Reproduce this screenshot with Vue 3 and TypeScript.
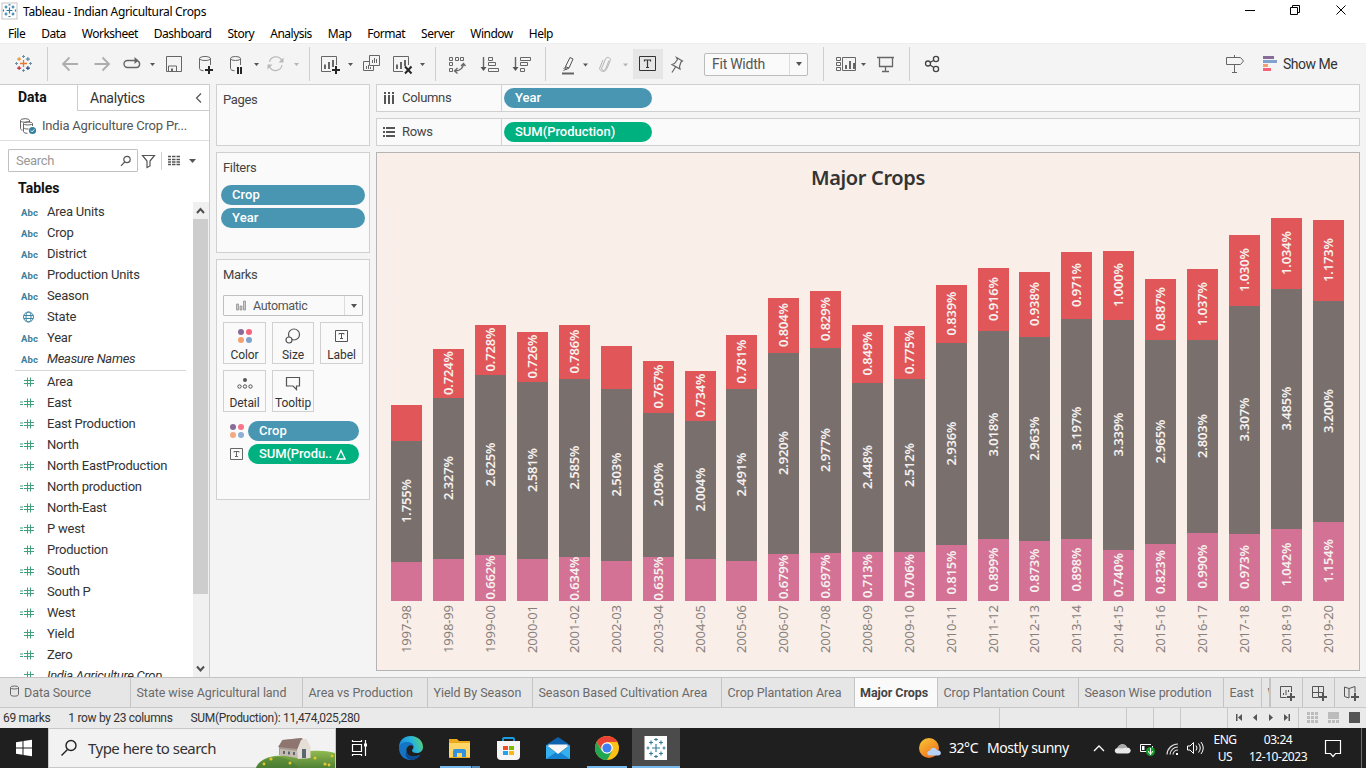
<script setup lang="ts">
interface Field { name: string; kind: 'abc' | 'geo' | 'num' | 'calc'; italic?: boolean }

const menus = ['File', 'Data', 'Worksheet', 'Dashboard', 'Story', 'Analysis', 'Map', 'Format', 'Server', 'Window', 'Help']

const dimensions: Field[] = [
  { name: 'Area Units', kind: 'abc' },
  { name: 'Crop', kind: 'abc' },
  { name: 'District', kind: 'abc' },
  { name: 'Production Units', kind: 'abc' },
  { name: 'Season', kind: 'abc' },
  { name: 'State', kind: 'geo' },
  { name: 'Year', kind: 'abc' },
  { name: 'Measure Names', kind: 'abc', italic: true },
]
const measures: Field[] = [
  { name: 'Area', kind: 'num' },
  { name: 'East', kind: 'calc' },
  { name: 'East Production', kind: 'calc' },
  { name: 'North', kind: 'calc' },
  { name: 'North EastProduction', kind: 'calc' },
  { name: 'North production', kind: 'calc' },
  { name: 'North-East', kind: 'calc' },
  { name: 'P west', kind: 'calc' },
  { name: 'Production', kind: 'num' },
  { name: 'South', kind: 'calc' },
  { name: 'South P', kind: 'calc' },
  { name: 'West', kind: 'calc' },
  { name: 'Yield', kind: 'num' },
  { name: 'Zero', kind: 'calc' },
  { name: 'India Agriculture Crop', kind: 'num', italic: true },
]

// x, top of the red, grey and pink segments, then their labels
type Bar = [string, number, number, number, number, string, string, string]
const base = 601
const bars: Bar[] = [
  ['1997-98', 391, 405, 441, 562, '', '1.755%', ''],
  ['1998-99', 433, 349, 398, 559, '0.724%', '2.327%', ''],
  ['1999-00', 475, 325, 375, 555, '0.728%', '2.625%', '0.662%'],
  ['2000-01', 517, 332, 382, 559, '0.726%', '2.581%', ''],
  ['2001-02', 559, 325, 379, 557, '0.786%', '2.585%', '0.634%'],
  ['2002-03', 601, 346, 389, 561, '', '2.503%', ''],
  ['2003-04', 643, 361, 413, 557, '0.767%', '2.090%', '0.635%'],
  ['2004-05', 685, 371, 421, 559, '0.734%', '2.004%', ''],
  ['2005-06', 726, 335, 389, 561, '0.781%', '2.491%', ''],
  ['2006-07', 768, 298, 353, 554, '0.804%', '2.920%', '0.679%'],
  ['2007-08', 810, 291, 348, 553, '0.829%', '2.977%', '0.697%'],
  ['2008-09', 852, 325, 383, 552, '0.849%', '2.448%', '0.713%'],
  ['2009-10', 894, 326, 379, 552, '0.775%', '2.512%', '0.706%'],
  ['2010-11', 936, 285, 343, 545, '0.839%', '2.936%', '0.815%'],
  ['2011-12', 978, 268, 331, 539, '0.916%', '3.018%', '0.899%'],
  ['2012-13', 1019, 272, 337, 541, '0.938%', '2.963%', '0.873%'],
  ['2013-14', 1061, 252, 319, 539, '0.971%', '3.197%', '0.898%'],
  ['2014-15', 1103, 251, 320, 550, '1.000%', '3.339%', '0.740%'],
  ['2015-16', 1145, 279, 340, 544, '0.887%', '2.965%', '0.823%'],
  ['2016-17', 1187, 269, 340, 533, '1.037%', '2.803%', '0.990%'],
  ['2017-18', 1229, 235, 306, 534, '1.030%', '3.307%', '0.973%'],
  ['2018-19', 1271, 218, 289, 529, '1.034%', '3.485%', '1.042%'],
  ['2019-20', 1313, 220, 301, 522, '1.173%', '3.200%', '1.154%'],
]
const colors = ['#e15759', '#79706e', '#d37295']
const segments = bars.flatMap(b => {
  const edges = [b[2], b[3], b[4], base]
  return colors.map((color, k) => ({
    color, x: b[1], y: edges[k], h: edges[k + 1] - edges[k], label: b[5 + k] as string,
  }))
})
const grid = [242, 302, 361, 421, 481, 541]

const sheets = [
  { name: 'State wise Agricultural land', w: 172 },
  { name: 'Area vs Production', w: 125 },
  { name: 'Yield By Season', w: 105 },
  { name: 'Season Based Cultivation Area', w: 189 },
  { name: 'Crop Plantation Area', w: 133 },
  { name: 'Major Crops', w: 83, active: true },
  { name: 'Crop Plantation Count', w: 141 },
  { name: 'Season Wise prodution', w: 145 },
  { name: 'East', w: 38 },
  { name: 'West', w: 8 },
]
const marks = ['Color', 'Size', 'Label', 'Detail', 'Tooltip']
const satellites = [[-4.4, -4.4, '#eb912c'], [4.4, -4.4, '#59879b'], [-4.4, 4.6, '#c72035'], [4.4, 4.6, '#1f457e']] as const
const outer = [[0, -7], [-7, 0], [7, 0], [0, 7]] as const
</script>

<template>
  <div class="screen">
    <header class="titlebar">
      <svg class="app-icon" width="17" height="18" viewBox="1 2 17 18">
        <rect x="2" y="3" width="15" height="16" fill="#fff" stroke="#c4c4c4" />
        <g stroke="#2f7ba4" stroke-width="1.2">
          <path d="M6.5 10.5h6M9.5 7.5v6M4.5 7h3M6 5.500v3M11.500 7h3M13 5.500v3M4.500 14h3M6 12.500v3M11.500 14h3M13 12.500v3M8.500 4.800h2M8.500 16.500h2M3.500 9.500v2M15.500 9.500v2" />
        </g>
      </svg>
      <span class="app-title">Tableau - Indian Agricultural Crops</span>
      <svg class="window-buttons" width="126" height="24" viewBox="1240 0 126 24" fill="none" stroke="#000">
        <path d="M1245 10.500h10M1290.500 7.500h7v7h-7zM1292.500 7.500v-2h7v7h-2M1336.500 5.500l9 9M1345.500 5.500l-9 9" />
      </svg>
    </header>

    <nav class="menu"><span v-for="m in menus" :key="m">{{ m }}</span></nav>

    <div class="toolbar">
      <svg width="48" height="41" viewBox="0 43 48 41" fill="none">
        <path d="M20 63.500h7M23.500 60v7" stroke="#e8762c" stroke-width="1.300" />
        <path v-for="(s, i) in satellites" :key="i" :d="`M${23.5 + s[0] - 2} ${63.5 + s[1]}h4M${23.5 + s[0]} ${63.5 + s[1] - 2}v4`" :stroke="s[2]" stroke-width="1.100" />
        <path v-for="(s, i) in outer" :key="'o' + i" :d="`M${23.5 + s[0] - 1.5} ${63.5 + s[1]}h3M${23.5 + s[0]} ${63.5 + s[1] - 1.5}v3`" stroke="#6a8fa6" />
        <path d="M47.500 47v34" stroke="#cfcfcf" />
      </svg>
      <svg width="262" height="41" viewBox="48 43 262 41" fill="none" stroke="#666">
        <path d="M78 64H63.500M69.500 57.500L63 64l6.500 6.500M94.500 64h14.500M102.500 57.500L109 64l-6.500 6.500" stroke="#adadad" stroke-width="1.800" />
        <path d="M132 60.500h-4.500a3.500 3.500 0 0 0 0 7h9a3.500 3.500 0 0 0 1-6.700M132 60.500h6" stroke-width="1.400" />
        <path d="M134.500 57l4 3.500-4 3.500z" fill="#666" stroke="none" />
        <path d="M166.500 56.500h15v15h-15zM168.500 71.500v-5.500h8v5.500" />
        <path d="M171 68.500h2v3h-2z" fill="#666" stroke="none" />
        <path d="M199.500 58.500v10c0 1.500 2 2 4 2.200M210.500 58.500v6.500" />
        <ellipse cx="205" cy="58.500" rx="5.500" ry="2" />
        <path d="M205 70h8M209 66v8" stroke="#262626" stroke-width="2" />
        <path d="M230.500 58.500v10c0 1.500 2 2 4 2.200M240.500 58.500v6.500" />
        <ellipse cx="235.500" cy="58.500" rx="5" ry="2" />
        <path d="M238 67v7M241 67v7" stroke="#262626" stroke-width="2" />
        <path d="M269.500 62a6.500 6.500 0 0 1 12-2M282 65a6.500 6.500 0 0 1-12.200 2" stroke="#b8b8b8" stroke-width="1.200" />
        <path d="M283.500 57.500v5h-5zM267.500 69.500v-5h5z" fill="#b8b8b8" stroke="none" />
        <path d="M150 63h5l-2.500 3zM254 63h5l-2.500 3z" fill="#555" stroke="none" />
        <path d="M294 63h5l-2.500 3z" fill="#b4b4b4" stroke="none" />
        <path d="M309.500 47v34" stroke="#cfcfcf" />
      </svg>
      <svg width="126" height="41" viewBox="310 43 126 41" fill="none" stroke="#666">
        <path d="M336.500 65v-8.500h-15v15h9.500M408.500 65v-8.500h-15v15h9.500" />
        <path d="M325 69v-4.500M329 69v-7M333 67v-7M397 69v-4.500M401 69v-7M405 66v-6" stroke-width="2" />
        <path d="M332 70h8M336 66v8" stroke="#262626" stroke-width="2" />
        <path d="M405 66.500l6.500 7M411.500 66.500l-6.500 7" stroke="#262626" stroke-width="2" />
        <path d="M369.500 55.500h10v10h-10zM369.500 61.500h-6v9h10v-5" />
        <path d="M372.500 63v-3M374.500 63v-5M376.500 63v-4M366.500 69v-3M368.500 69v-4M370.500 69v-2" />
        <path d="M348 63h5l-2.500 3zM420 63h5l-2.500 3z" fill="#555" stroke="none" />
        <path d="M435.500 47v34" stroke="#cfcfcf" />
      </svg>
      <svg width="111" height="41" viewBox="436 43 111 41" fill="none" stroke="#666">
        <path d="M449.500 57.500h3v3h-3zM455.500 57.500h3v3h-3zM460.500 57.500h3v3h-3zM449.500 62.500h3v3h-3zM449.500 68.500h3v3h-3z" />
        <path d="M463.500 64q-.5 6-8 7M461 66l2.500-2.500 2 2.500M457.500 68l-3 3 3 2.500" stroke-width="1.300" />
        <path d="M483.500 57v12M515.500 57v12" stroke-width="1.400" />
        <path d="M480.500 67h6l-3 4zM512.500 67h6l-3 4z" fill="#555" stroke="none" />
        <path d="M488.500 57.500h4v3h-4zM488.500 62.500h7v3h-7zM488.500 68.500h10v3h-10zM520.500 57.500h10v3h-10zM520.500 62.500h7v3h-7zM520.500 68.500h4v3h-4z" />
        <path d="M545.500 47v34" stroke="#cfcfcf" />
      </svg>
      <div class="tool-format">
        <svg width="86" height="41" viewBox="547 43 86 41" fill="none" stroke="#555">
          <path d="M565.500 65.500l4.500-9 3 1.500-4 9-3 1.500zM565.500 65.500l3.500 1.700M563.500 67.500l2-1M563.500 69.500l3-1.500" />
          <path d="M562 72.500h12" stroke="#666" stroke-width="2" />
          <path d="M609 59.500l-3.500 8.500c-1 2.500-4.500 1.500-3.800-1l3.800-9c1.500-3 5.500-1.500 4.800 1.500l-3.800 9c-1.500 3-7 2.500-6.800-1.500l3.300-8" stroke="#b4b4b4" />
          <path d="M583 62.500h5l-2.500 3z" fill="#555" stroke="none" />
          <path d="M623 62.500h5l-2.500 3z" fill="#b4b4b4" stroke="none" />
        </svg>
        <span class="label-toggle">
          <svg width="30" height="30" viewBox="633 49 30 30" fill="none" stroke="#333">
            <path d="M639.500 56.500h16v14h-16z" />
            <path d="M644.500 61.500v-1.500h6v1.500M647.500 60v7.500M646 67.500h3" stroke-width="1.200" />
          </svg>
        </span>
        <svg width="41" height="41" viewBox="663 43 41 41" fill="none" stroke="#666" stroke-width="1.200">
          <path d="M676.500 56.500l6 3.500-1.500 1-1.500 4.500.5 2.500-8-4.500 2.500-1 3-4zM675.500 66l-3.500 5.500" />
        </svg>
        <div class="fit"><span>Fit Width</span><i></i></div>
      </div>
      <svg width="87" height="41" viewBox="823 43 87 41" fill="none" stroke="#666">
        <path d="M823.500 47v34M909.500 47v34" stroke="#cfcfcf" />
        <path d="M836.500 57.500h4v3h-4zM836.500 62.500h4v3h-4zM836.500 67.500h4v3h-4zM842.500 57.500h13v13h-13z" />
        <path d="M846 69v-4M850 69v-8M854 69v-6" stroke-width="2" />
        <path d="M861 63h5l-2.500 3z" fill="#555" stroke="none" />
        <path d="M877 57.500h17M879.500 58v8.500h13V58M885.500 67v4.500M882 71.500h7" stroke-width="1.300" />
      </svg>
      <svg width="40" height="41" viewBox="910 43 40 41" fill="none" stroke="#444" stroke-width="1.300">
        <circle cx="928" cy="63.500" r="2.500" /><circle cx="936" cy="59" r="2.600" /><circle cx="936" cy="69" r="2.600" />
        <path d="M930 62.500l3.500-2M930 65l3.800 2.500" />
      </svg>
      <svg class="show-icons" width="64" height="41" viewBox="1218 43 64 41" fill="none" stroke="#666">
        <path d="M1234.500 55v2M1226.500 57.500h14l3 3.500-3 3.500h-14zM1234.500 64.500v8M1232 72.500h5" />
        <g stroke="none">
          <path d="M1263 56h11v3h-11z" fill="#876c97" /><path d="M1263 60h14v3h-14z" fill="#7fa3cd" />
          <path d="M1263 64h5v3h-5z" fill="#f4a16f" /><path d="M1263 68h8v3h-8z" fill="#f8637a" />
        </g>
      </svg>
      <span class="show-me">Show Me</span>
    </div>

    <main class="workspace">
      <aside class="data-pane">
        <div class="pane-tabs">
          <b>Data</b>
          <div><span>Analytics</span><svg width="8" height="12" viewBox="0 0 8 12"><path d="M6 1.500L1.500 6 6 10.500" fill="none" stroke="#555" stroke-width="1.200" /></svg></div>
        </div>
        <div class="source">
          <svg width="18" height="18" viewBox="19 116 18 18" fill="none" stroke="#666">
            <ellipse cx="25" cy="119.500" rx="4.500" ry="1.800" /><path d="M20.500 119.500v8c0 1 1 1.500 2 1.700M29.500 119v2" />
            <ellipse cx="28" cy="122.500" rx="4.500" ry="1.500" /><path d="M23.500 122.500v8c0 1.200 2 1.800 4 1.800M32.500 122.500v2.500M23.500 126.500c1 1.500 3 1.500 5 1.500" />
            <circle cx="32.500" cy="129.500" r="3.600" fill="#35809f" stroke="none" /><path d="M30.800 129.500l1.300 1.300 2.200-2.400" stroke="#fff" />
          </svg>
          <span>India Agriculture Crop Pr...</span>
        </div>
        <div class="search-row">
          <div class="search"><span>Search</span><svg width="12" height="12" viewBox="0 0 12 12" fill="none" stroke="#555" stroke-width="1.200"><circle cx="7" cy="4.500" r="3.200" /><path d="M4.700 7L1 10.800" /></svg></div>
          <svg width="60" height="20" viewBox="138 150 60 20" fill="none" stroke="#555">
            <path d="M142.500 154.500h12l-4.500 5.500v5l-3 1.500V160z" stroke-width="1.200" />
            <path d="M161.500 151v18" stroke="#d0d0d0" />
            <path d="M168 155.500h3M172 155.500h3.500M176.500 155.500h3.500M168 158.500h3M172 158.500h3.500M176.500 158.500h3.500M168 161h3M172 161h3.500M176.500 161h3.500M168 163.500h3M172 163.500h3.500M176.500 163.500h3.500" stroke-width="1.300" />
            <path d="M189 158h7l-3.500 4z" fill="#555" stroke="none" />
          </svg>
        </div>
        <h3>Tables</h3>
        <div class="fields">
          <div class="field-list">
            <template v-for="(group, g) in [dimensions, measures]" :key="g">
              <div v-if="g === 1" class="rule"></div>
              <div v-for="f in group" :key="f.name" class="field" :class="{ italic: f.italic }">
                <span v-if="f.kind === 'abc'" class="abc">Abc</span>
                <svg v-else-if="f.kind === 'geo'" class="glyph" width="20" height="15" viewBox="0 0 20 15" fill="none" stroke="#3f86a6">
                  <circle cx="10.500" cy="8" r="5" /><ellipse cx="10.500" cy="8" rx="2.500" ry="5" /><path d="M6 6.500h9M6 9.500h9" />
                </svg>
                <svg v-else class="glyph" width="20" height="15" viewBox="0 0 20 15" fill="none" stroke="#3ea37c">
                  <path d="M6 6.500h10M6 9.500h10M9.500 3.500v9M12.500 3.500v9" />
                  <path v-if="f.kind === 'calc'" d="M2 7h3M2 9.500h3" />
                </svg>
                <span>{{ f.name }}</span>
              </div>
            </template>
          </div>
          <div class="scroll">
            <svg width="15" height="17" viewBox="0 0 15 17"><path d="M4 11l3.500-4 3.500 4" fill="none" stroke="#505050" stroke-width="2" /></svg>
            <div class="thumb"></div>
            <svg class="down" width="15" height="17" viewBox="0 0 15 17"><path d="M4 6.500l3.500 4 3.500-4" fill="none" stroke="#505050" stroke-width="2" /></svg>
          </div>
        </div>
      </aside>

      <section class="cards">
        <div class="card pages"><h4>Pages</h4></div>
        <div class="card filters"><h4>Filters</h4><div class="pill">Crop</div><div class="pill">Year</div></div>
        <div class="card marks">
          <h4>Marks</h4>
          <div class="mark-type">
            <svg width="12" height="12" viewBox="0 0 12 12"><path d="M1.500 4h2v6h-2zM5 6h2v4H5zM8.500 1h2v9h-2z" fill="#c9c9c9" stroke="#888" stroke-width=".7" /></svg>
            <span>Automatic</span><i></i>
          </div>
          <div class="mark-grid">
            <div v-for="m in marks" :key="m" class="mark">
              <svg width="20" height="18" viewBox="0 0 20 18" fill="none" stroke="#555">
                <g v-if="m === 'Color'" stroke="none"><circle cx="6" cy="5" r="3" fill="#876c97" /><circle cx="14" cy="5" r="3" fill="#f8637a" /><circle cx="6" cy="13" r="3" fill="#f4a16f" /><circle cx="14" cy="13" r="3" fill="#7fa3cd" /></g>
                <g v-else-if="m === 'Size'" stroke-width="1.200"><circle cx="11" cy="7.500" r="5.500" /><circle cx="6" cy="13" r="3" fill="#fafafa" /></g>
                <g v-else-if="m === 'Label'"><path d="M3.500 3.500h12v11h-12zM7 7.500v-1h5v1M9.500 6.500v5M8 11.500h3" /></g>
                <g v-else-if="m === 'Detail'"><circle cx="10" cy="5" r="2" fill="#555" stroke="none" /><circle cx="4.500" cy="11.500" r="1.700" /><circle cx="10" cy="11.500" r="1.700" /><circle cx="15.500" cy="11.500" r="1.700" /></g>
                <path v-else d="M3.500 2.500h13v8.500h-3v3.500l-3.500-3.500H3.500z" stroke-width="1.200" />
              </svg>
              <span>{{ m }}</span>
            </div>
          </div>
          <div class="encoding">
            <svg width="20" height="18" viewBox="0 0 20 18"><circle cx="6" cy="5" r="3" fill="#876c97" /><circle cx="14" cy="5" r="3" fill="#f8748a" /><circle cx="6" cy="13" r="3" fill="#f4a980" /><circle cx="14" cy="13" r="3" fill="#8eaed6" /></svg>
            <div class="pill">Crop</div>
          </div>
          <div class="encoding">
            <svg width="20" height="18" viewBox="0 0 20 18" fill="none" stroke="#666"><path d="M3.500 3.500h12v11h-12zM7 7.500v-1h5v1M9.500 6.500v5M8 11.500h3" /></svg>
            <div class="pill green"><span>SUM(Produ..</span><svg width="10" height="11" viewBox="0 0 10 11"><path d="M5 1.500l4 8.500H1z" fill="none" stroke="#fff" stroke-width="1.300" /></svg></div>
          </div>
        </div>
      </section>

      <section class="sheet">
        <div class="shelf">
          <div class="shelf-name"><svg width="12" height="13" viewBox="0 0 12 13" fill="#555"><path d="M1 0h2v2H1zM5 0h2v2H5zM9 0h2v2H9zM1 3h2v9H1zM5 3h2v9H5zM9 3h2v9H9z" /></svg><span>Columns</span></div>
          <div class="pill">Year</div>
        </div>
        <div class="shelf">
          <div class="shelf-name"><svg width="12" height="13" viewBox="0 0 12 13" fill="#555"><path d="M0 1h2v2H0zM0 5h2v2H0zM0 9h2v2H0zM3 1h9v2H3zM3 5h9v2H3zM3 9h9v2H3z" /></svg><span>Rows</span></div>
          <div class="pill green">SUM(Production)</div>
        </div>
        <div class="viz">
          <h1>Major Crops</h1>
          <svg class="chart" width="982" height="468" viewBox="377 202 982 468">
            <path v-for="y in grid" :key="y" :d="`M387 ${y + 0.5}H1349`" stroke="#f6efec" />
            <path d="M386.500 202v402M386 602.500h963" stroke="#f4efed" fill="none" />
            <path v-for="b in bars" :key="b[0]" :d="`M${b[1] + 36.5} 602v3`" stroke="#f4efed" />
            <rect v-for="(s, i) in segments" :key="i" :x="s.x" :y="s.y" width="31" :height="s.h" :fill="s.color" shape-rendering="crispEdges" />
            <g class="value">
              <template v-for="(s, i) in segments" :key="i">
                <text v-if="s.label" :transform="`translate(${s.x + 20} ${s.y + s.h / 2 - 0.5}) rotate(-90)`" textLength="44">{{ s.label }}</text>
              </template>
            </g>
            <g class="year">
              <text v-for="b in bars" :key="b[0]" :transform="`translate(${b[1] + 20} 629) rotate(-90)`" textLength="48">{{ b[0] }}</text>
            </g>
          </svg>
        </div>
      </section>
    </main>

    <div class="tabs">
      <div class="tab source-tab"><svg width="9" height="12" viewBox="0 0 9 12" fill="none" stroke="#666"><ellipse cx="4.500" cy="2.500" rx="4" ry="1.500" /><path d="M.5 2.500v7c0 2.200 8 2.200 8 0v-7" /></svg>Data Source</div>
      <div v-for="s in sheets" :key="s.name" class="tab" :class="{ active: s.active }" :style="{ width: s.w + 'px' }">{{ s.name }}</div>
      <svg class="new-tabs" width="97" height="29" viewBox="1269 678 97 29" fill="none" stroke="#555">
        <path d="M1269.500 677v30M1301.500 677v30M1333.500 677v30" stroke="#c4c4c4" />
        <path d="M1290.500 692v-5.500h-11v11h6M1282.500 695v-2M1285 695v-5M1287.500 692v-2M1311.500 697.500v-11h11v6M1311.500 692.500h11M1317.500 686.500v11M1311.500 697.500h6M1343.500 687l4.500 1.500v9.500l-4.500-1.500zM1348 688.500l6-2v6" />
        <path d="M1286 697h8M1290 693v8M1318 697h8M1322 693v8M1350 697h8M1354 693v8" stroke-width="2" />
      </svg>
    </div>

    <div class="status">
      <span>69 marks</span><span>1 row by 23 columns</span><span>SUM(Production): 11,474,025,280</span>
      <svg width="368" height="20" viewBox="998 708 368 20" fill="#555">
        <path d="M999.500 708v20M1126.500 708v20M1153.500 708v20M1180.500 708v20M1227.500 708v20M1298.500 708v20" stroke="#c8c8c8" />
        <path d="M1236 714h1.500v7h-1.500zM1242 714v7l-4-3.500zM1257 714v7l-4-3.500zM1269 714v7l4-3.500zM1284 714v7l4-3.500zM1288.500 714h1.500v7h-1.500z" />
        <path d="M1307 712h3v3h-3zM1311 712h3v3h-3zM1315 712h3v3h-3zM1307 716h3v3h-3zM1311 716h3v3h-3zM1315 716h3v3h-3zM1307 720h3v3h-3zM1311 720h3v3h-3zM1315 720h3v3h-3zM1328 712h11v7h-11zM1328 720h3v3h-3zM1332 720h3v3h-3zM1336 720h3v3h-3z" fill="#bcbcbc" />
        <path d="M1349 712h11v11h-11z" />
      </svg>
    </div>

    <footer class="taskbar">
      <svg width="48" height="40" viewBox="0 728 48 40" fill="#fff"><path d="M16 742.200l6.500-1v6.300H16zM23.500 741l8.500-1.200v7.700h-8.500zM16 748.500h6.500v6.300l-6.500-1zM23.500 748.500H32v7.700l-8.500-1.200z" /></svg>
      <div class="task-search">
        <svg width="18" height="20" viewBox="0 0 18 20" fill="none" stroke="#222" stroke-width="1.400"><circle cx="11" cy="7.500" r="5" /><path d="M7.500 11.500L1.500 17.500" /></svg>
        <span>Type here to search</span>
        <svg class="barn" width="80" height="40" viewBox="256 728 80 40">
          <defs><linearGradient id="hill" x1="0" y1="0" x2="0" y2="1"><stop offset="0" stop-color="#91ba4f" /><stop offset="1" stop-color="#4f8135" /></linearGradient></defs>
          <path d="M257 768c3-10 19-14 33-12 12-5 32-7 46-3v15z" fill="url(#hill)" />
          <path d="M257 768c3-7 13-11 24-11 9 2 15 5 18 11z" fill="#42752f" opacity=".4" />
          <path d="M280 746l3-6 20-2 6 8v13l-29-4z" fill="#a69b91" />
          <path d="M279 747l5-7 19-2-4 11z" fill="#8f7570" />
          <path d="M298 750l4-10 5-1.500 4.500 8V758l-13 1z" fill="#e4ded7" />
          <path d="M281 749l17 2v7l-17-3z" fill="#c4bbb1" />
          <path d="M284 751h2v3h-2zM289 751.500h2v3h-2zM294 752h2v3h-2zM303 749h4v9h-4z" fill="#5b6770" />
          <g fill="#e7c62d"><circle cx="272" cy="759" r="1.600" /><circle cx="265" cy="764" r="1.400" /><circle cx="291" cy="763" r="1.500" /><circle cx="316" cy="758" r="1.500" /><circle cx="326" cy="764" r="1.600" /><circle cx="333" cy="756" r="1.300" /><circle cx="330" cy="765" r="1.400" /></g>
        </svg>
      </div>
      <svg width="344" height="40" viewBox="336 728 344 40">
        <defs>
          <linearGradient id="edge" x1="0" y1=".3" x2="1" y2="0"><stop offset="0" stop-color="#1b8fdc" /><stop offset=".5" stop-color="#28b5dd" /><stop offset="1" stop-color="#63d957" /></linearGradient>
        </defs>
        <path d="M632 728h48v40h-48z" fill="#4b4b4b" />
        <g fill="none" stroke="#fff" stroke-width="1.200"><path d="M352.500 744.500h9v7h-9zM352.500 742v-2M361.500 742v-2M352.500 741.500h9M352.500 754v2M361.500 754v2M352.500 754.500h9M365.500 740v16" /><path d="M364 743.500h3v3h-3z" fill="#fff" stroke="none" /></g>
        <g>
          <path d="M399 748c0-8 5-12 12-12s12 5 12 11c0 4-3 6-6.500 6-3 0-4.500-1-4.500-2.500 0-1 1.500-1.500 1.500-3.500 0-2.500-3-4-6-4-4 0-8 2-8.500 5z" fill="url(#edge)" />
          <path d="M399 748c.5-4 4-6 8-6 3 0 6 1 6.500 4-4-2-7.500 1-7 5 .5 5 6 7 13 4-2 3.500-5.500 5-9 5-6.500 0-11.500-5-11.500-12z" fill="#1574c4" />
          <path d="M406.500 751c.5 5 6 7 13 4l1-.5c-2 4-6 5.500-9.500 5.500-4-1-7-4-4.500-9z" fill="#0d4c94" />
        </g>
        <g><path d="M449 739h8l2 2h11v17h-21z" fill="#eca91c" /><path d="M449 743h21v14h-21z" fill="#fdd665" /><path d="M453 757v-6q0-2 2-2h9q2 0 2 2v6h-4v-4h-5v4z" fill="#3192df" /></g>
        <path d="M440 766h31v2h-31z" fill="#78b9ed" /><path d="M471 766h1v2h-1z" fill="#344b5e" /><path d="M472 766h8v2h-8z" fill="#568bb7" />
        <g><path d="M503 742v-3q0-1 1-1h9q1 0 1 1v3" fill="none" stroke="#1b9de2" stroke-width="1.800" /><path d="M497 741h23v15q0 4-4 4h-15q-4 0-4-4z" fill="#f5f5f5" /><path d="M503 746h5v4h-5z" fill="#f04e23" /><path d="M509 746h5v4h-5z" fill="#7cb900" /><path d="M503 751h5v4h-5z" fill="#1ea4e9" /><path d="M509 751h5v4h-5z" fill="#feb813" /></g>
        <g><path d="M546 745l12-8 12 8v3h-24z" fill="#0d61ad" /><path d="M548 744.500h20l-10 9z" fill="#f7f7f7" /><path d="M546 745l12 9 12-9v14h-24z" fill="#34b0ef" /><path d="M546 759l12-8 12 8z" fill="#1683d0" /><path d="M547 745.500h22l-11 8.500z" fill="#f7f7f7" /></g>
        <g><circle cx="607" cy="748" r="12" fill="#fbc116" /><path d="M607 742h10.400a12 12 0 0 0-20.800 0l5.400 8z" fill="#ea4335" /><path d="M596.600 742a12 12 0 0 0 10.400 18l5.200-9L602 751z" fill="#22a654" /><circle cx="607" cy="748" r="5.800" fill="#fff" /><circle cx="607" cy="748" r="4.600" fill="#3f7ff0" /></g>
        <path d="M587 766h40v2h-40zM632 766h48v2h-48z" fill="#78b9ed" />
        <path d="M644.500 736h22.500v24h-22.500z" fill="#fff" />
        <path d="M652 748h8M656 744v8M649 742.500h4M651 740.500v4M659 742.500h4M661 740.500v4M649 753.500h4M651 751.500v4M659 753.500h4M661 751.500v4M654 739.500h4M656 738v3M654 756.500h4M656 755v3M646.500 748h3M648 746.500v3M662.500 748h3M664 746.500v3" stroke="#397f9f" stroke-width="1.200" />
      </svg>
      <svg class="weather" width="26" height="26" viewBox="0 0 26 26"><defs><linearGradient id="sun" x1="0" y1="0" x2=".7" y2="1"><stop stop-color="#f9c834" /><stop offset="1" stop-color="#ed7220" /></linearGradient></defs><circle cx="11" cy="13" r="10" fill="url(#sun)" /><path d="M12 20.500c-4-.5-3.500-5 0-4.800 1-4 6-4 7-.5 5-.2 5 5.300 1 5.300z" fill="#b6d2f6" /></svg>
      <span class="temp">32°C</span><span class="sky">Mostly sunny</span>
      <svg width="120" height="40" viewBox="1089 728 120 40" fill="none" stroke="#fff">
        <path d="M1094 751l5-5 5 5" stroke-width="1.300" />
        <path d="M1118 753.500c-5-.5-3.500-6 .2-5.500 1-5 7.500-5 8.700-.5 5 0 5 6 .5 6z" fill="#e8e8e8" stroke="none" /><path d="M1117 748c2-5 8-5 10-.5l-5 1z" fill="#aaa" stroke="none" />
        <path d="M1151 744.500h-10.500v7h7M1152.500 746v2" /><path d="M1142 746h2.500v4h-2.500z" fill="#fff" stroke="none" /><circle cx="1150.500" cy="751.500" r="4.500" fill="#119b25" stroke="none" /><path d="M1150.500 748v7M1148.500 751q0 2.500 2 2.500t2-2.500" />
        <path d="M1167 754.500a11 11 0 0 1 11-10.500M1170 754.500a8 8 0 0 1 8-7.500M1173 754.500a5 5 0 0 1 5-4.500" stroke="#dedede" stroke-width="1.200" /><path d="M1176 753h2v2h-2z" fill="#fff" stroke="none" />
        <path d="M1187.500 746h2.500l3.500-3.500v11l-3.500-3.500h-2.500zM1196 745.500q2 2.500 0 5M1198.500 743.500q3.500 4.500 0 9M1201 742q4.500 6 0 12" />
      </svg>
      <div class="lang"><span>ENG</span><span>US</span></div>
      <div class="clock"><span>03:24</span><span>12-10-2023</span></div>
      <svg class="notify" width="45" height="40" viewBox="1321 728 45 40" fill="none" stroke="#fff"><path d="M1325.500 740.500h15v13h-5l-2.500 3-2.500-3h-5z" stroke-width="1.200" /><path d="M1361.500 728v40" stroke="#6f6f6f" /></svg>
    </footer>
  </div>
</template>

<style>
html, body { overflow: hidden; background: #f4f4f4; }
</style>

<style scoped>
.screen { width: 1366px; height: 768px; display: flex; flex-direction: column; overflow: hidden; background: #f4f4f4; color: #333; font: 13px Roboto, "Noto Sans", sans-serif; white-space: nowrap; }
.screen * { box-sizing: border-box; }
svg { flex: none; display: block; }
h1, h3, h4 { margin: 0; font-weight: 400; }

.titlebar { height: 24px; flex: none; display: flex; align-items: center; background: #fff; color: #000; font: 12px "Noto Sans", sans-serif; }
.app-icon { margin: -2px 5px 0 1px; }
.app-title { margin-top: -1px; letter-spacing: -.33px; }
.window-buttons { margin-left: auto; }
.menu { height: 19px; flex: none; display: flex; gap: 16px; padding-left: 8px; background: #fff; color: #000; font: 12px/19px "Noto Sans", sans-serif; letter-spacing: -.5px; }

.toolbar { height: 41px; flex: none; display: flex; align-items: center; border-top: 1px solid #eee; }
.toolbar > svg { margin-top: -1px; }
.tool-format { display: flex; align-items: center; width: 276px; height: 40px; }
.label-toggle { width: 30px; height: 30px; background: #e6e6e6; }
.fit { width: 104px; height: 23px; border: 1px solid #bcbcbc; border-radius: 2px; background: #fafafa; display: flex; color: #555; font-size: 14px; line-height: 21px; }
.fit span { width: 84px; padding-left: 7px; letter-spacing: -.25px; }
.fit i, .mark-type i { flex: 1; border-left: 1px solid #dcdcdc; display: flex; align-items: center; justify-content: center; }
.fit i::after, .mark-type i::after { content: ""; border: 3.5px solid transparent; border-top: 4px solid #555; border-bottom: 0; }
.show-icons { margin-left: auto; }
.show-me { width: 84px; padding-left: 1px; font-size: 14px; color: #333; letter-spacing: -.5px; }

.workspace { height: 593px; flex: none; display: flex; }
.data-pane { width: 210px; border-right: 1px solid #ccc; background: #fff; display: flex; flex-direction: column; }
.pane-tabs { height: 27px; display: flex; border-top: 1px solid #ccc; font-size: 14px; flex: none; }
.pane-tabs b { width: 77px; padding: 4px 0 0 18px; color: #111; font-weight: 700; }
.pane-tabs div { flex: 1; display: flex; justify-content: space-between; align-items: center; padding: 0 6px 0 12px; border-left: 1px solid #ccc; border-bottom: 1px solid #ccc; letter-spacing: -.25px; }
.source { height: 30px; flex: none; display: flex; align-items: center; gap: 5px; padding-left: 19px; border-bottom: 1px solid #dedede; color: #555; letter-spacing: -.2px; }
.search-row { height: 39px; flex: none; display: flex; align-items: center; padding-left: 8px; }
.search { width: 130px; height: 23px; border: 1px solid #c0c0c0; border-radius: 1px; display: flex; align-items: center; justify-content: space-between; padding: 0 5px 0 7px; color: #999; letter-spacing: -.3px; }
h3 { height: 21px; flex: none; padding: 0 0 0 18px; font-size: 14px; font-weight: 700; line-height: 17px; color: #111; }
.fields { flex: 1; min-height: 0; display: flex; overflow: hidden; }
.field-list { width: 193px; overflow: hidden; }
.field { height: 21px; display: flex; align-items: center; padding-left: 18px; color: #333; letter-spacing: -.22px; }
.italic { font-style: italic; }
.italic span:last-child { letter-spacing: -.3px; }
.abc { width: 29px; padding: 2px 0 0 3px; font: 700 9.5px Roboto, sans-serif; color: #3c7f9b; letter-spacing: .1px; }
.glyph { margin-right: 9px; }
.rule { height: 1px; margin: 1px 7px 0 15px; background: #d8d8d8; }
.scroll { width: 16px; margin-top: 1px; background: #f0f0f0; display: flex; flex-direction: column; }
.thumb { width: 15px; height: 375px; background: #cdcdcd; flex: none; }
.down { margin-top: auto; }

.cards { width: 154px; margin-left: 6px; display: flex; flex-direction: column; gap: 6px; }
.card { border: 1px solid #d0d0d0; background: #fafafa; flex: none; }
.card h4 { padding-left: 6px; line-height: 16px; margin-top: 7px; color: #444; letter-spacing: -.35px; }
.card .pill { letter-spacing: .1px; }
.pages { height: 62px; }
.filters { height: 101px; }
.marks { height: 241px; }
.pill { height: 20px; border-radius: 10px; background: #4996b2; color: #fff; font-size: 13px; font-weight: 500; line-height: 20px; padding-left: 11px; }
.green { background: #00b180; }
.filters .pill { margin: 3px 4px 0; }
.filters h4 + .pill { margin-top: 9px; }
.mark-type { margin: 12px 6px 6px; height: 21px; border: 1px solid #c0c0c0; border-radius: 1px; display: flex; align-items: center; color: #555; }
.mark-type svg { margin: 0 6px 0 11px; }
.mark-type span { width: 91px; font-size: 12.5px; letter-spacing: -.35px; }
.mark-type i { align-self: stretch; }
.mark-grid { display: grid; grid-template-columns: 43px 42px 43px; gap: 6px; margin-left: 6px; }
.mark { height: 42px; border: 1px solid #d0d0d0; display: flex; flex-direction: column; align-items: center; padding-top: 4px; font-size: 12px; line-height: 20px; color: #333; letter-spacing: -.1px; }
.encoding { display: flex; align-items: center; margin: 3px 0 0 10px; gap: 1px; }
.mark-grid + .encoding { margin-top: 9px; }
.encoding .pill { width: 111px; display: flex; align-items: center; }
.encoding .pill svg { margin-left: 4px; }
.encoding .pill span { letter-spacing: -.1px; }

.sheet { width: 984px; margin-left: 6px; display: flex; flex-direction: column; }
.shelf { height: 28px; margin-bottom: 6px; border: 1px solid #d0d0d0; background: #fafafa; display: flex; align-items: center; flex: none; }
.shelf-name { width: 125px; height: 26px; border-right: 1px solid #d0d0d0; display: flex; align-items: center; gap: 7px; padding-left: 6px; color: #444; letter-spacing: -.3px; }
.shelf-name span { margin-top: -1px; }
.shelf .pill { width: 148px; margin-left: 2px; letter-spacing: -.02px; }
.viz { height: 519px; border: 1px solid #b4b4b4; background: #f9eee8; display: flex; flex-direction: column; justify-content: space-between; }
h1 { text-align: center; height: 49px; font: 600 20px/50px "Noto Sans", sans-serif; color: #333; letter-spacing: -.35px; }
.chart { font: 13px "Noto Sans", sans-serif; }
.chart text { text-anchor: middle; }
.value { font-weight: 600; fill: #f6f1ef; }
.year { fill: #86807d; }

.tabs { height: 31px; flex: none; display: flex; background: #e6e6e6; border-top: 1px solid #c4c4c4; border-bottom: 1px solid #c8c8c8; }
.tab { flex: none; padding-left: 5.5px; border-right: 1px solid #c4c4c4; overflow: hidden; font-size: 12.5px; line-height: 30px; color: #6a6a6a; letter-spacing: -.05px; }
.source-tab { width: 131px; padding-left: 10px; display: flex; align-items: center; gap: 5px; }
.source-tab svg { margin-top: -3px; }
.active { background: #fafafa; color: #444; font-weight: 700; padding-left: 5px; line-height: 29px; }
.new-tabs { margin-left: auto; }
.status { height: 20px; flex: none; display: flex; background: #eaeaea; line-height: 20px; font-size: 12px; padding-left: 3px; color: #333; letter-spacing: -.32px; }
.status span { margin-right: 18px; }
.status svg { margin-left: auto; }

.taskbar { height: 40px; flex: none; display: flex; background: #1f1f1f; color: #fff; font-family: "Noto Sans", sans-serif; }
.task-search { width: 288px; background: #f2f2f2; border: 1px solid #c8c8c8; display: flex; align-items: center; font-size: 15px; color: #333; padding-left: 11px; }
.task-search span { margin-left: 10px; letter-spacing: -.53px; }
.task-search .barn { margin-left: auto; }
.weather { margin: 7px 0 0 238px; }
.temp, .sky { line-height: 40px; font-size: 14px; letter-spacing: -.45px; }
.temp { margin-left: 5px; width: 38px; }
.sky { width: 102px; }
.lang, .clock { display: flex; flex-direction: column; align-items: center; font-size: 12px; line-height: 17px; padding-top: 3px; letter-spacing: -.45px; }
.lang { width: 32px; }
.clock { width: 74px; }
.notify { margin-left: auto; }
</style>
